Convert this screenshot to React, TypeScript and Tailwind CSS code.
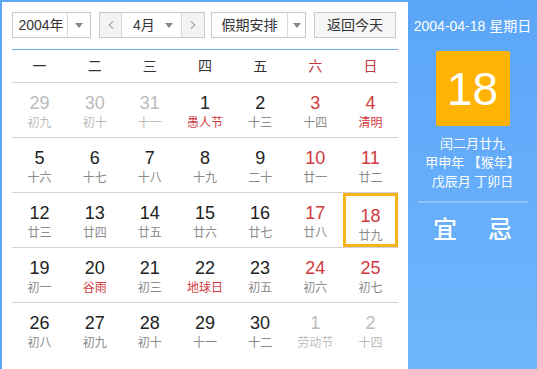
import { ChevronLeft, ChevronRight } from 'lucide-react'

interface Day {
  n: number
  lunar: string
  redNum?: boolean
  redLunar?: boolean
  other?: boolean
  selected?: boolean
}

const weekdays = ['一', '二', '三', '四', '五', '六', '日']

const rows: Day[][] = [
  [
    { n: 29, lunar: '初九', other: true },
    { n: 30, lunar: '初十', other: true },
    { n: 31, lunar: '十一', other: true },
    { n: 1, lunar: '愚人节', redLunar: true },
    { n: 2, lunar: '十三' },
    { n: 3, lunar: '十四', redNum: true },
    { n: 4, lunar: '清明', redNum: true, redLunar: true },
  ],
  [
    { n: 5, lunar: '十六' },
    { n: 6, lunar: '十七' },
    { n: 7, lunar: '十八' },
    { n: 8, lunar: '十九' },
    { n: 9, lunar: '二十' },
    { n: 10, lunar: '廿一', redNum: true },
    { n: 11, lunar: '廿二', redNum: true },
  ],
  [
    { n: 12, lunar: '廿三' },
    { n: 13, lunar: '廿四' },
    { n: 14, lunar: '廿五' },
    { n: 15, lunar: '廿六' },
    { n: 16, lunar: '廿七' },
    { n: 17, lunar: '廿八', redNum: true },
    { n: 18, lunar: '廿九', redNum: true, selected: true },
  ],
  [
    { n: 19, lunar: '初一' },
    { n: 20, lunar: '谷雨', redLunar: true },
    { n: 21, lunar: '初三' },
    { n: 22, lunar: '地球日', redLunar: true },
    { n: 23, lunar: '初五' },
    { n: 24, lunar: '初六', redNum: true },
    { n: 25, lunar: '初七', redNum: true },
  ],
  [
    { n: 26, lunar: '初八' },
    { n: 27, lunar: '初九' },
    { n: 28, lunar: '初十' },
    { n: 29, lunar: '十一' },
    { n: 30, lunar: '十二' },
    { n: 1, lunar: '劳动节', other: true },
    { n: 2, lunar: '十四', other: true },
  ],
]

const font = { fontFamily: '"Liberation Sans", "Noto Sans CJK SC", sans-serif' }

function Caret() {
  return <span className="w-0 h-0 border-l-[4px] border-r-[4px] border-t-[5px] border-l-transparent border-r-transparent border-t-[#888]" />
}

export default function App() {
  return (
    <div className="w-[537px] h-[369px] bg-[#5ea7f8] flex overflow-hidden" style={font}>
      <div className="w-[406px] h-[367px] mt-[2px] ml-[2px] bg-white pt-[10px] pl-[10px] pr-[10px]">
        {/* controls */}
        <div className="flex items-center h-[26px] text-[14px] text-[#333]">
          <div className="flex h-[26px] w-[79px] border border-[#c9c9c9] bg-white">
            <span className="flex-1 flex items-center justify-center pl-[2px]">2004年</span>
            <span className="w-[23px] border-l border-[#d8d8d8] flex items-center justify-center"><Caret /></span>
          </div>
          <div className="flex h-[26px] w-[106px] ml-[8px] border border-[#c9c9c9]">
            <span className="w-[22px] bg-[#f3f3f3] border-r border-[#d8d8d8] flex items-center justify-center">
              <ChevronLeft className="w-[14px] h-[14px] text-[#666]" strokeWidth={1.5} />
            </span>
            <span className="flex-1 flex items-center justify-between pl-[11px] pr-[8px] bg-white">
              4月
              <Caret />
            </span>
            <span className="w-[23px] bg-[#f3f3f3] border-l border-[#d8d8d8] flex items-center justify-center">
              <ChevronRight className="w-[14px] h-[14px] text-[#666]" strokeWidth={1.5} />
            </span>
          </div>
          <div className="flex h-[26px] w-[95px] ml-[6px] border border-[#c9c9c9] bg-white">
            <span className="flex-1 flex items-center justify-center">假期安排</span>
            <span className="w-[18px] border-l border-[#d8d8d8] flex items-center justify-center"><Caret /></span>
          </div>
          <div className="h-[26px] w-[82px] ml-[8px] border border-[#c9c9c9] bg-[#f5f5f5] flex items-center justify-center">
            返回今天
          </div>
        </div>

        <div className="mt-[11px] h-px bg-[#6aaeef]" />

        {/* weekday header */}
        <div className="grid grid-cols-7 h-[33px] border-b border-[#d2d2d2] text-[14px] items-center">
          {weekdays.map((w, i) => (
            <div key={w} className={`text-center ${i >= 5 ? 'text-[#c33a3e]' : 'text-[#333]'}`}>{w}</div>
          ))}
        </div>

        {/* days */}
        {rows.map((row, ri) => (
          <div key={ri} className={`grid grid-cols-7 h-[55px] ${ri < rows.length - 1 ? 'border-b border-[#d2d2d2]' : ''}`}>
            {row.map((d, di) => {
              const numColor = d.other ? 'text-[#bbb]' : d.redNum ? 'text-[#cf3a40]' : 'text-[#222]'
              const lunarColor = d.other ? 'text-[#bbb]' : d.redLunar ? 'text-[#cf3a40]' : 'text-[#8a8a8a]'
              return (
                <div
                  key={di}
                  className={`flex flex-col items-center pt-[10px] ${d.selected ? 'border-[3px] border-[#f6b41c] pt-[7px]' : ''}`}
                >
                  <span className={`text-[18px] leading-[20px] ${numColor}`}>{d.n}</span>
                  <span className={`text-[12px] leading-[16px] mt-[2px] ${lunarColor}`}>{d.lunar}</span>
                </div>
              )
            })}
          </div>
        ))}
      </div>

      {/* right panel */}
      <div className="flex-1 h-full bg-gradient-to-b from-[#5ba5f8] to-[#70b6fd] flex flex-col items-center text-white">
        <div className="mt-[17px] text-[14px] leading-[18px]">2004-04-18 星期日</div>
        <div className="mt-[16px] w-[74px] h-[75px] bg-[#ffb302] rounded-[2px] flex items-center justify-center text-[46px] leading-none">18</div>
        <div className="mt-[8px] text-[13px] leading-[19px] text-center">
          <div>闰二月廿九</div>
          <div>甲申年 【猴年】</div>
          <div>戊辰月 丁卯日</div>
        </div>
        <div className="mt-[10px] w-[110px] h-[2px] bg-[#8ec5fb]" />
        <div className="mt-[13px] flex gap-[31px] text-[24px] font-medium leading-[28px]">
          <span>宜</span>
          <span>忌</span>
        </div>
      </div>
    </div>
  )
}
